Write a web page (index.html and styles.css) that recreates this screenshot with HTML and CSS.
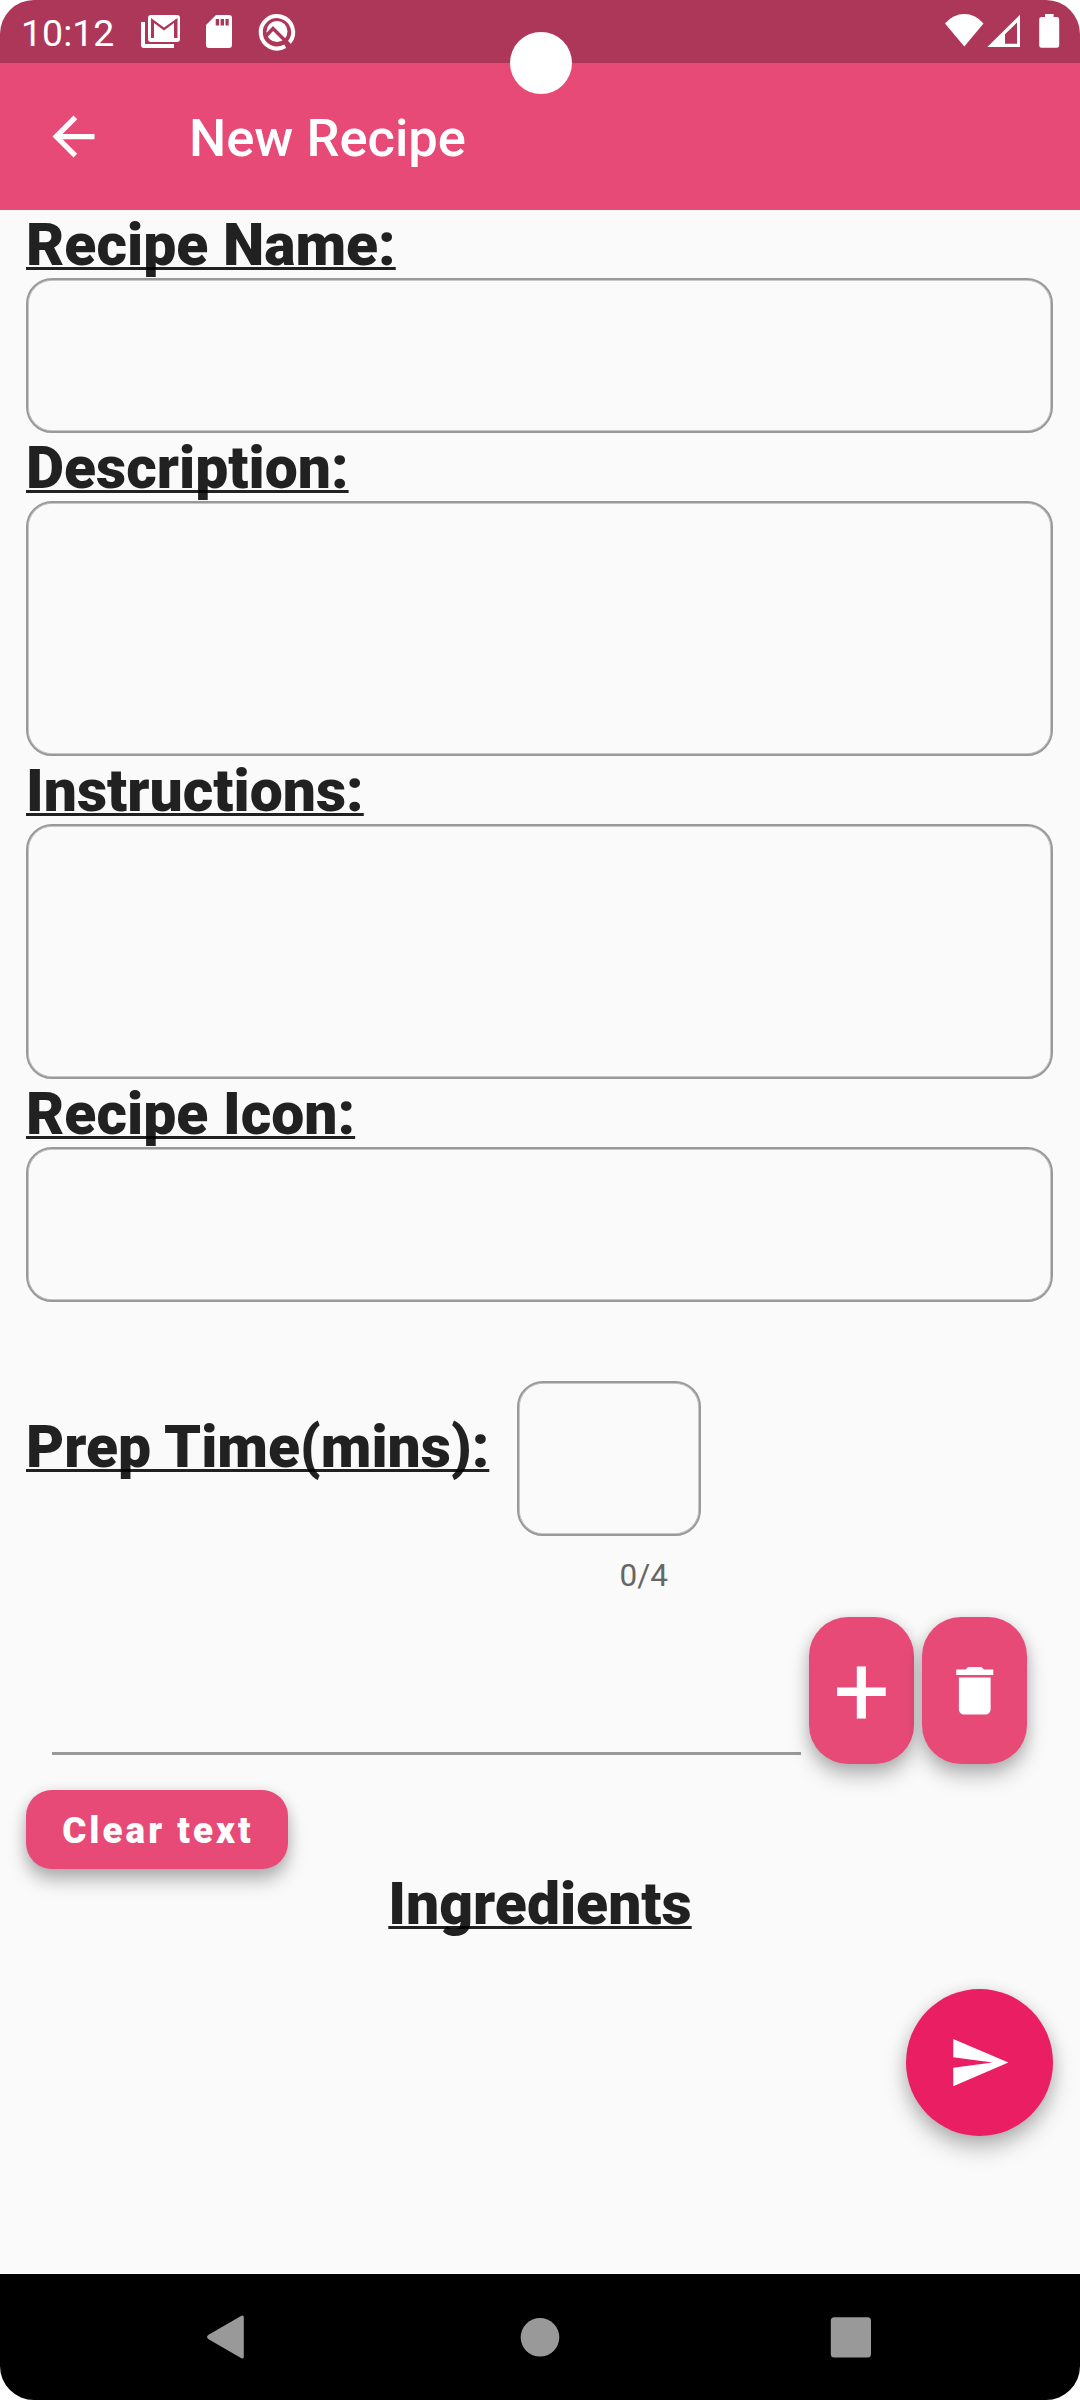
FILE: index.html
```html
<!DOCTYPE html>
<html lang="en">
<head>
<meta charset="utf-8">
<title>New Recipe</title>
<link rel="stylesheet" href="styles.css">
</head>
<body>
<div class="screen">
  <header class="status">
    <span class="clock">10:12</span>
    <svg class="status-left" viewBox="136 0 164 63">
      <path d="M141 22h4v22h29v4h-30q-3 0-3-3z"/>
      <path fill-rule="evenodd" d="M151 15h26q3 0 3 3v21q0 3-3 3h-26q-3 0-3-3v-21q0-3 3-3zM151 18v20h3v-15l10 7.500 10-7.500v15h3.500v-20l-13.500 9.500z"/>
      <path fill-rule="evenodd" d="M216 15h13q3 0 3 3v27q0 3-3 3h-20q-3 0-3-3v-20zM215.700 19v6.500h3.400v-6.500zM220.600 19v6.500h3.400v-6.500zM225.500 19v6.500h3.200v-6.500z"/>
      <path class="ring" d="M285.200 46.200a16.200 16.200 0 1 1 4.200-3.600"/>
      <circle cx="277" cy="31.500" r="10.500"/>
      <path class="slash" d="M266 36l7-7.500 15.500 15.500"/>
    </svg>
    <svg class="status-right" viewBox="940 0 124 63">
      <path d="M945 23.500q8-9.500 19.300-9.500t19.200 9.500l-19.200 23z"/>
      <path fill-rule="evenodd" d="M987.300 47l32.700-32.300v32.300zM1005 43.700h12v-21.200l-12 11.700z"/>
      <path d="M1045 14h8.600v3h3.200q2.400 0 2.400 2.400v26q0 2.400-2.400 2.400h-15.200q-2.400 0-2.400-2.400v-26q0-2.400 2.400-2.400h3.400z"/>
    </svg>
  </header>
  <div class="cutout"></div>
  <div class="appbar">
    <svg class="back" viewBox="0 0 24 24"><path d="M20 11H7.830l5.590-5.590L12 4l-8 8 8 8 1.410-1.410L7.830 13H20v-2z"/></svg>
    <h1 class="title">New Recipe</h1>
  </div>
  <main class="form">
    <label class="label">Recipe Name:</label>
    <div class="field"></div>
    <label class="label">Description:</label>
    <div class="field tall"></div>
    <label class="label">Instructions:</label>
    <div class="field tall"></div>
    <label class="label">Recipe Icon:</label>
    <div class="field"></div>
    <div class="prep">
      <label class="label">Prep Time(mins):</label>
      <div class="prep-input">
        <div class="field small"></div>
        <span class="counter">0/4</span>
      </div>
    </div>
    <div class="adder">
      <div class="line-input"></div>
      <button class="square"><span class="plus">+</span></button>
      <button class="square"><svg class="trash" viewBox="0 0 24 24"><path d="M6 19c0 1.100.9 2 2 2h8c1.100 0 2-.9 2-2V7H6v12zM19 4h-3.500l-1-1h-5l-1 1H5v2h14V4z"/></svg></button>
    </div>
    <button class="clear">Clear text</button>
    <h2 class="label ingredients">Ingredients</h2>
    <button class="fab"><svg class="send" viewBox="0 0 24 24"><path d="M2.010 21L23 12 2.010 3 2 10l15 2-15 2z"/></svg></button>
  </main>
  <nav class="nav">
    <svg class="nav-icons" viewBox="0 0 1080 126">
      <path d="M241 42q2.800-1.500 2.800 1.500v39q0 3-2.800 1.500l-32-18.500q-4-2.500 0-5z"/>
      <circle cx="540" cy="63.300" r="19.300"/>
      <rect x="830.800" y="43.200" width="40.200" height="40.200" rx="3.500"/>
    </svg>
  </nav>
</div>
</body>
</html>
```
FILE: styles.css
```css
* { box-sizing: border-box; }
body { margin: 0; background: #fff; font-family: Roboto, sans-serif; }
svg { display: block; fill: #fff; flex: none; }
button { border: 0; padding: 0; margin: 0; font-family: inherit; color: #fff; background: #e84a78; display: flex; align-items: center; justify-content: center; flex: none; }
.screen { position: relative; width: 1080px; height: 2400px; border-radius: 34px; overflow: hidden; background: #fafafa; display: flex; flex-direction: column; }
.status { height: 63px; flex: none; background: #ad3759; display: flex; padding: 0 16px 0 21px; }
.clock { width: 115px; font-size: 37.500px; line-height: 66px; color: #fff; }
.status-left { width: 164px; height: 63px; }
.status-right { width: 124px; height: 63px; margin-left: auto; }
.ring { fill: none; stroke: #fff; stroke-width: 4; }
.slash { fill: none; stroke: #ad3759; stroke-width: 3.500; }
.cutout { position: absolute; left: 509.500px; top: 31.500px; width: 62px; height: 62px; border-radius: 50%; background: #fff; }
.appbar { height: 147px; flex: none; background: #e84a78; display: flex; align-items: center; padding-left: 42px; }
.back { width: 63px; height: 63px; }
.title { margin: 0 0 0 84px; font-size: 52.500px; line-height: 62px; font-weight: 500; color: #fff; padding-top: 2px; }
.form { flex: 1; padding: 0 26px; display: flex; flex-direction: column; align-items: flex-start; }
.label { flex: none; display: block; margin: 0; height: 68px; line-height: 69px; font-size: 58.800px; font-weight: 900; color: rgba(0,0,0,.87); text-decoration: underline; text-decoration-thickness: 3px; text-underline-offset: 2px; text-decoration-skip-ink: none; white-space: nowrap; }
.field { width: 1027px; height: 155px; flex: none; border: 2px solid #999; border-radius: 26px; box-shadow: inset 0 0 0 .8px #b8b8b8; }
.tall { height: 255px; }
.small { width: 184px; }
.prep { height: 236px; margin-top: 79px; display: flex; gap: 28px; }
.prep .label { margin-top: 31px; width: 463px; }
.prep-input { display: flex; flex-direction: column; align-items: flex-end; width: 184px; }
.counter { font-size: 31.500px; line-height: 38px; margin: 21px 33px 0 0; color: #666; }
.adder { display: flex; height: 147px; padding-left: 26px; gap: 8px; }
.line-input { width: 749px; height: 138px; border-bottom: 3px solid #999; }
.square { width: 105px; height: 147px; border-radius: 39px; box-shadow: 0 12px 20px rgba(0,0,0,.25), 0 2px 14px rgba(0,0,0,.12); }
.plus { font-size: 99.750px; line-height: 117px; padding-top: 1px; }
.trash { width: 63.500px; height: 63.500px; }
.clear { width: 262px; height: 79px; margin-top: 26px; border-radius: 26px; font-size: 36.750px; font-weight: 900; letter-spacing: 3.050px; padding-left: 2px; padding-top: 1px; box-shadow: 0 12px 18px rgba(0,0,0,.25), 0 2px 14px rgba(0,0,0,.12); }
.ingredients { align-self: center; }
.fab { width: 147px; height: 147px; margin: 52px 1px 0 0; align-self: flex-end; border-radius: 50%; background: #e91e63; box-shadow: 0 12px 22px rgba(0,0,0,.26), 0 2px 16px rgba(0,0,0,.1); }
.send { width: 63px; height: 63px; }
.nav { height: 126px; flex: none; background: #000; }
.nav-icons { width: 1080px; height: 126px; fill: #999; }
```
